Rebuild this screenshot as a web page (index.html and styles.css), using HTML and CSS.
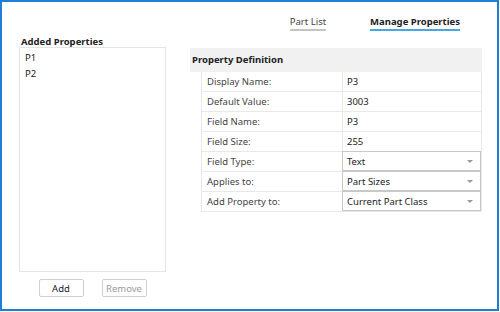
FILE: index.html
```html
<!DOCTYPE html>
<html lang="en">
<head>
    <meta charset="UTF-8">
    <title>Manage Properties</title>
    <link rel="stylesheet" href="styles.css">
</head>
<body>

<div class="janela">

    <!-- Abas -->
    <div class="abas">
        <span class="aba">Part List</span>
        <span class="aba ativa">Manage Properties</span>
    </div>

    <div class="conteudo">

        <!-- Lista de propriedades -->
        <div class="coluna-lista">
            <div class="titulo-lista">Added Properties</div>
            <div class="lista">
                <div class="item">P1</div>
                <div class="item">P2</div>
            </div>
            <div class="botoes">
                <button class="btn">Add</button>
                <button class="btn desativado">Remove</button>
            </div>
        </div>

        <!-- Definição -->
        <div class="definicao">
            <div class="cabecalho">Property Definition</div>
            <div class="tabela">
                <div class="linha"><div class="rotulo">Display Name:</div><div class="valor">P3</div></div>
                <div class="linha"><div class="rotulo">Default Value:</div><div class="valor">3003</div></div>
                <div class="linha"><div class="rotulo">Field Name:</div><div class="valor">P3</div></div>
                <div class="linha"><div class="rotulo">Field Size:</div><div class="valor">255</div></div>
                <div class="linha"><div class="rotulo">Field Type:</div><div class="valor combo">Text<span class="seta"></span></div></div>
                <div class="linha"><div class="rotulo">Applies to:</div><div class="valor combo">Part Sizes<span class="seta"></span></div></div>
                <div class="linha"><div class="rotulo">Add Property to:</div><div class="valor combo">Current Part Class<span class="seta"></span></div></div>
            </div>
        </div>

    </div>
</div>

</body>
</html>
```

FILE: styles.css
```css
body {
    margin: 0;
    font-family: 'Noto Sans', 'Open Sans', sans-serif;
    font-size: 9.5px;
    color: #222;
    background: white;
}

.janela {
    width: 499px;
    height: 311px;
    box-sizing: border-box;
    border: 2px solid #1f7fd4;
    background: white;
}

/* Abas */
.abas {
    display: flex;
    justify-content: flex-end;
    gap: 44px;
    padding: 13px 37px 0 0;
    height: 21px;
}

.aba {
    color: #444;
    height: 14px;
    line-height: 13px;
    border-bottom: 2px solid #c4c4c4;
}

.aba.ativa {
    font-weight: bold;
    color: #222;
    border-bottom-color: #4aa6e2;
}

.conteudo {
    display: flex;
    padding: 0 0 0 17px;
}

/* Coluna da lista */
.coluna-lista {
    width: 147px;
    display: flex;
    flex-direction: column;
}

.titulo-lista {
    font-weight: bold;
    height: 11px;
    line-height: 12px;
    padding-left: 2px;
}

.lista {
    border: 1px solid #e4e4e4;
    padding-top: 2px;
    box-sizing: border-box;
    height: 225px;
}

.item {
    height: 16px;
    line-height: 16px;
    padding-left: 5px;
}

.botoes {
    display: flex;
    justify-content: center;
    gap: 18px;
    margin-top: 7px;
}

.btn {
    width: 45px;
    height: 18px;
    font-family: inherit;
    font-size: 9.5px;
    color: #222;
    background: white;
    border: 1px solid #cfcfcf;
    border-radius: 2px;
    padding: 0;
}

.btn.desativado {
    color: #9a9a9a;
}

/* Definição */
.definicao {
    margin-left: 24px;
    width: 292px;
    margin-top: 12px;
}

.cabecalho {
    background: #f1f1f1;
    font-weight: bold;
    height: 24px;
    line-height: 24px;
    padding-left: 2px;
}

.tabela {
    margin-left: 11px;
    border: 1px solid #e8e8e8;
    border-top: none;
}

.linha {
    display: flex;
    height: 19px;
    border-top: 1px solid #e8e8e8;
}

.linha:first-child {
    border-top: none;
}

.rotulo {
    width: 135px;
    padding-left: 5px;
    line-height: 19px;
    color: #444;
    border-right: 1px solid #e8e8e8;
}

.valor {
    flex: 1;
    padding-left: 4px;
    line-height: 19px;
    position: relative;
}

.combo {
    border: 1px solid #c8c8c8;
    margin: -1px 0 0 -1px;
}

.seta {
    position: absolute;
    right: 7px;
    top: 8px;
    border-left: 3px solid transparent;
    border-right: 3px solid transparent;
    border-top: 3px solid #999;
}
```
